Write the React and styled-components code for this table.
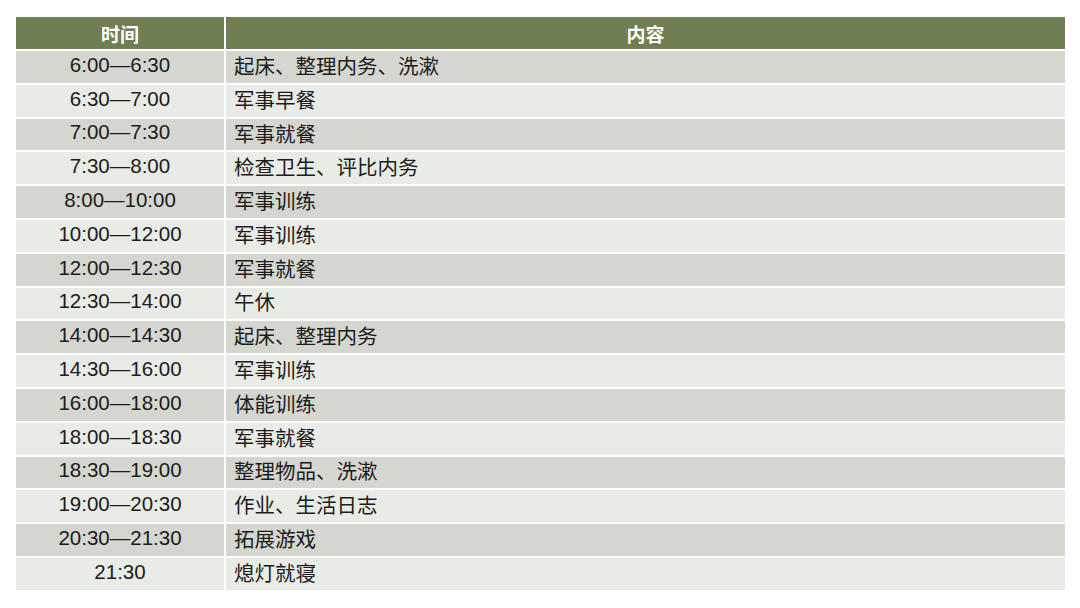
import styled, { createGlobalStyle } from "styled-components";

const rows = [
  ["6:00—6:30", "起床、整理内务、洗漱"],
  ["6:30—7:00", "军事早餐"],
  ["7:00—7:30", "军事就餐"],
  ["7:30—8:00", "检查卫生、评比内务"],
  ["8:00—10:00", "军事训练"],
  ["10:00—12:00", "军事训练"],
  ["12:00—12:30", "军事就餐"],
  ["12:30—14:00", "午休"],
  ["14:00—14:30", "起床、整理内务"],
  ["14:30—16:00", "军事训练"],
  ["16:00—18:00", "体能训练"],
  ["18:00—18:30", "军事就餐"],
  ["18:30—19:00", "整理物品、洗漱"],
  ["19:00—20:30", "作业、生活日志"],
  ["20:30—21:30", "拓展游戏"],
  ["21:30", "熄灯就寝"],
];

const GlobalStyle = createGlobalStyle`
  html, body {
    margin: 0;
    padding: 0;
    background: #ffffff;
  }
  body {
    font-family: "Liberation Sans", "Noto Sans CJK SC", sans-serif;
  }
`;

const Page = styled.div`
  width: 1080px;
  height: 608px;
  padding: 17px 15px 0 16px;
  box-sizing: border-box;
`;

const Table = styled.div`
  display: grid;
  grid-template-columns: 208px 1fr;
  grid-template-rows: 32px;
  grid-auto-rows: 31.8px;
  gap: 2px;
  background: #ffffff;
`;

const HeadCell = styled.div`
  background: #6f7f53;
  color: #ffffff;
  font-weight: bold;
  font-size: 19px;
  display: flex;
  align-items: center;
  justify-content: center;
`;

const Cell = styled.div`
  background: ${(p) => (p.$odd ? "#d4d6cf" : "#e9ebe6")};
  color: #1c1c1c;
  font-size: 20.5px;
  display: flex;
  align-items: center;
  justify-content: ${(p) => (p.$center ? "center" : "flex-start")};
  padding: 0 0 4px ${(p) => (p.$center ? "0" : "8px")};
  box-sizing: border-box;
`;

export default function App() {
  return (
    <>
      <GlobalStyle />
      <Page>
        <Table>
          <HeadCell>时间</HeadCell>
          <HeadCell>内容</HeadCell>
          {rows.map(([time, text], i) => [
            <Cell key={`t${i}`} $odd={i % 2 === 0} $center>
              {time}
            </Cell>,
            <Cell key={`c${i}`} $odd={i % 2 === 0}>
              {text}
            </Cell>,
          ])}
        </Table>
      </Page>
    </>
  );
}
